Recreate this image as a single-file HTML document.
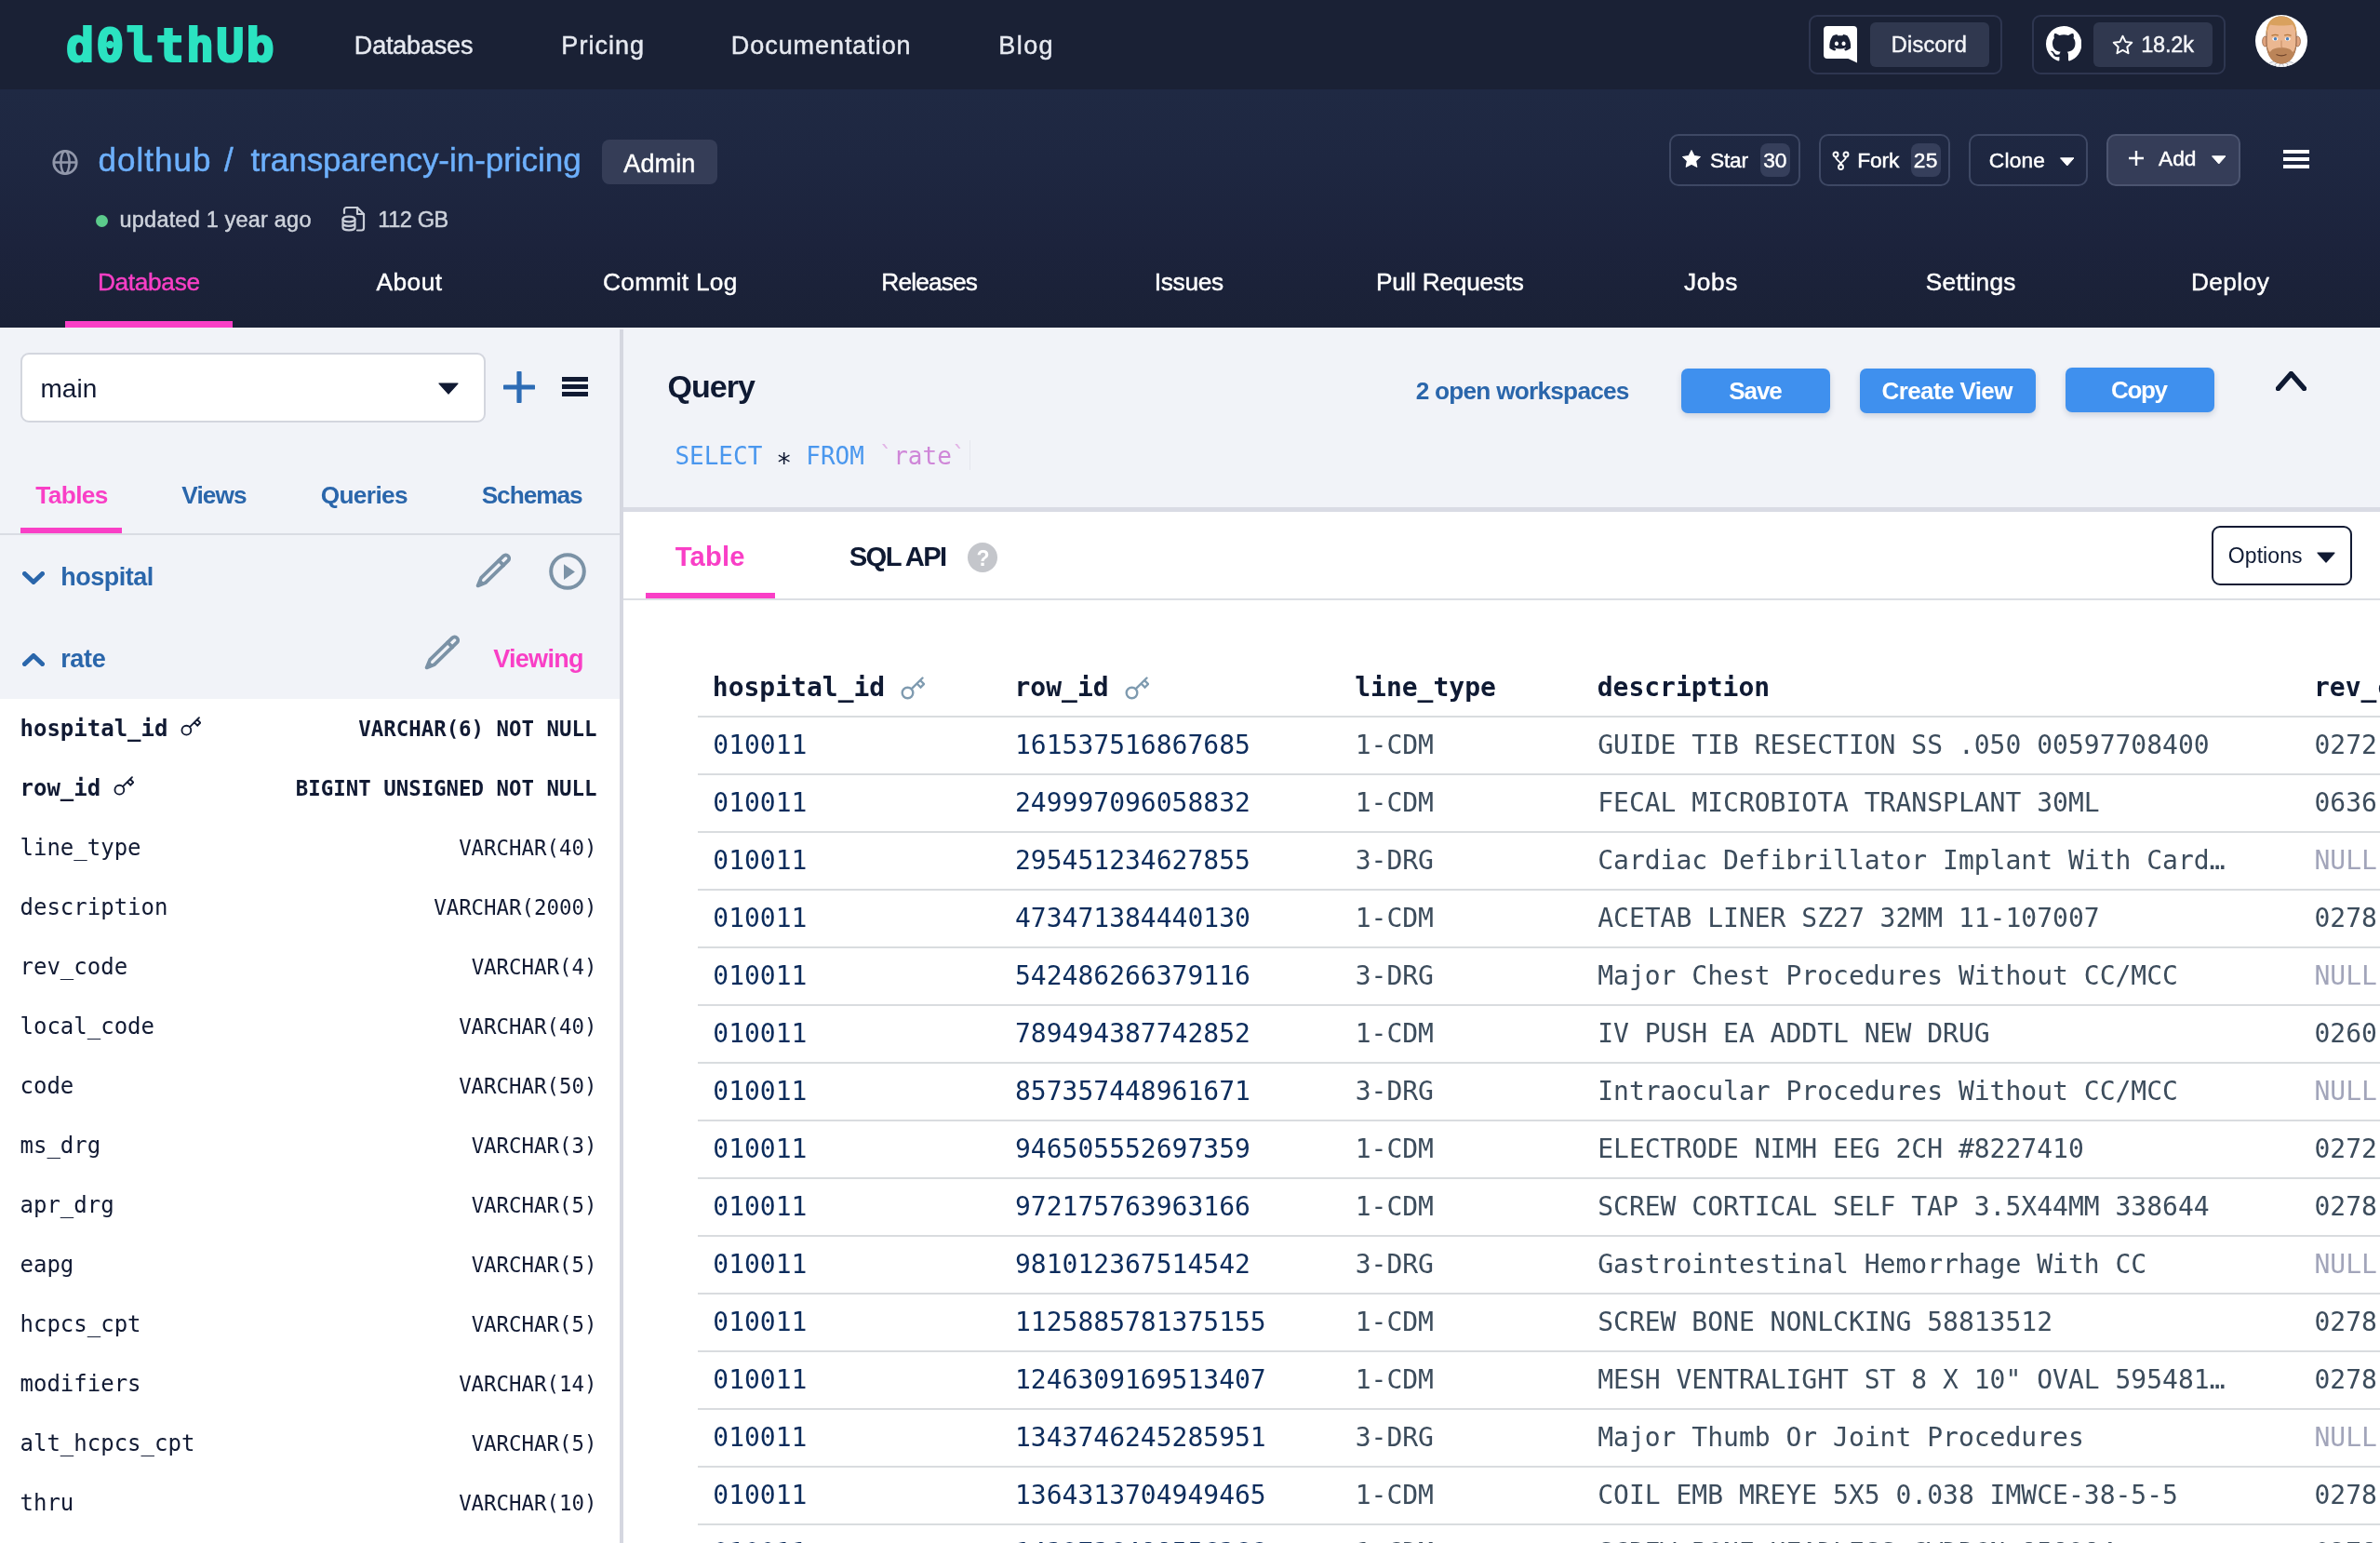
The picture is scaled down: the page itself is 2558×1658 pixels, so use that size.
<!DOCTYPE html>
<html lang="en"><head><meta charset="utf-8"><title>dolthub/transparency-in-pricing</title>
<style>
html,body{margin:0;padding:0}
body{width:2558px;height:1658px;overflow:hidden;position:relative;background:#fff;font-family:"Liberation Sans",sans-serif;transform:translateZ(0)}
.a{position:absolute;display:block}
.t{position:absolute;white-space:pre;line-height:1;display:block;text-decoration:none}
.s{font-family:"Liberation Sans",sans-serif}
.m{font-family:"DejaVu Sans Mono","Liberation Mono",monospace}
</style></head>
<body>
<div aria-hidden="true">
<div class="a" style="left:0px;top:352px;width:2558px;height:1306px;background:#f1f3f8;"></div>
<div class="a" style="left:0px;top:0px;width:2558px;height:96px;background:#1a2135;"></div>
<div class="a" style="left:0px;top:96px;width:2558px;height:256px;background:linear-gradient(180deg,#1f2943 0%,#1e2741 30%,#1c233c 65%,#1a2136 100%);"></div>
<div class="a" style="left:0px;top:751px;width:666px;height:907px;background:#fff;"></div>
<div class="a" style="left:670px;top:550px;width:1888px;height:1108px;background:#fff;"></div>
<div class="a" style="left:666px;top:354px;width:4px;height:1304px;background:#d5d7e0;"></div>
<div class="a" style="left:0px;top:573px;width:666px;height:2px;background:#d9dce3;"></div>
<div class="a" style="left:670px;top:545px;width:1888px;height:5px;background:#d9dbe4;"></div>
<div class="a" style="left:670px;top:643px;width:1888px;height:2px;background:#dcdfe4;"></div>
</div>
<nav aria-label="Site">
<span class="t m" style="left:71px;top:24.2px;font-size:50px;font-weight:700;color:#2be3c1;-webkit-text-stroke:2.2px #2be3c1;letter-spacing:2.15px;paint-order:stroke fill">d0lthUb</span>
<div class="a" style="left:1944px;top:16px;width:208px;height:64px;background:transparent;border-radius:9px;border:2px solid #2e3650;box-sizing:border-box;"></div>
<div class="a" style="left:2010px;top:24px;width:128px;height:48px;background:#30384f;border-radius:6px;"></div>
<svg class="a" style="left:1958px;top:26px;" width="42" height="44" viewBox="0 0 42 44"><path d="M6 2h28a4 4 0 0 1 4 4v35.500l-9.500-4.500H6a4 4 0 0 1-4-4V6a4 4 0 0 1 4-4z" fill="#fff"/><g transform="translate(8.3,8.4) scale(0.954)"><path d="M20.317 4.3698a19.7913 19.7913 0 00-4.8851-1.5152.0741.0741 0 00-.0785.0371c-.211.3753-.4447.8648-.6083 1.2495-1.8447-.2762-3.68-.2762-5.4868 0-.1636-.3933-.4058-.8742-.6177-1.2495a.077.077 0 00-.0785-.037 19.7363 19.7363 0 00-4.8852 1.515.0699.0699 0 00-.0321.0277C.5334 9.0458-.319 13.5799.0992 18.0578a.0824.0824 0 00.0312.0561c2.0528 1.5076 4.0413 2.4228 5.9929 3.0294a.0777.0777 0 00.0842-.0276c.4616-.6304.8731-1.2952 1.226-1.9942a.076.076 0 00-.0416-.1057c-.6528-.2476-1.2743-.5495-1.8722-.8923a.077.077 0 01-.0076-.1277c.1258-.0943.2517-.1923.3718-.2914a.0743.0743 0 01.0776-.0105c3.9278 1.7933 8.18 1.7933 12.0614 0a.0739.0739 0 01.0785.0095c.1202.099.246.1981.3728.2924a.077.077 0 01-.0066.1276 12.2986 12.2986 0 01-1.873.8914.0766.0766 0 00-.0407.1067c.3604.698.7719 1.3628 1.225 1.9932a.076.076 0 00.0842.0286c1.961-.6067 3.9495-1.5219 6.0023-3.0294a.077.077 0 00.0313-.0552c.5004-5.177-.8382-9.6739-3.5485-13.6604a.061.061 0 00-.0312-.0286zM8.02 15.3312c-1.1825 0-2.1569-1.0857-2.1569-2.419 0-1.3332.9555-2.4189 2.157-2.4189 1.2108 0 2.1757 1.0952 2.1568 2.419 0 1.3332-.9555 2.4189-2.1569 2.4189zm7.9748 0c-1.1825 0-2.1569-1.0857-2.1569-2.419 0-1.3332.9554-2.4189 2.1569-2.4189 1.2108 0 2.1757 1.0952 2.1568 2.419 0 1.3332-.946 2.4189-2.1568 2.4189z" fill="#1a2135"/></g></svg>
<div class="a" style="left:2184px;top:16px;width:208px;height:64px;background:transparent;border-radius:9px;border:2px solid #2e3650;box-sizing:border-box;"></div>
<div class="a" style="left:2250px;top:24px;width:128px;height:48px;background:#30384f;border-radius:6px;"></div>
<svg class="a" style="left:2199px;top:28.4px;" width="38.4" height="38.4" viewBox="0 0 16 16"><path d="M8 0C3.58 0 0 3.58 0 8c0 3.54 2.29 6.53 5.47 7.59.4.07.55-.17.55-.38 0-.19-.01-.82-.01-1.49-2.01.37-2.53-.49-2.69-.94-.09-.23-.48-.94-.82-1.13-.28-.15-.68-.52-.01-.53.63-.01 1.08.58 1.23.82.72 1.21 1.87.87 2.33.66.07-.52.28-.87.51-1.07-1.78-.2-3.64-.89-3.64-3.95 0-.87.31-1.59.82-2.15-.08-.2-.36-1.02.08-2.12 0 0 .67-.21 2.2.82.64-.18 1.32-.27 2-.27.68 0 1.36.09 2 .27 1.53-1.04 2.2-.82 2.2-.82.44 1.1.16 1.92.08 2.12.51.56.82 1.27.82 2.15 0 3.07-1.87 3.75-3.65 3.95.29.25.54.73.54 1.48 0 1.07-.01 1.93-.01 2.2 0 .21.15.46.55.38A8.013 8.013 0 0016 8c0-4.42-3.58-8-8-8z" fill="#fff"/></svg>
<svg class="a" style="left:2269.5px;top:36.5px;" width="23" height="23" viewBox="0 0 24 24"><path d="M12 1.8l3.1 6.5 7.1.9-5.2 4.9 1.3 7-6.3-3.4-6.3 3.4 1.3-7-5.2-4.9 7.1-.9z" fill="none" stroke="#fff" stroke-width="2" stroke-linejoin="round"/></svg>
<svg class="a" style="left:2424px;top:15.8px;" width="56" height="56" viewBox="0 0 56 56"><defs><clipPath id="av"><circle cx="28" cy="28" r="28"/></clipPath></defs><circle cx="28" cy="28" r="28" fill="#fff"/><g clip-path="url(#av)"><path d="M9 60c2-8 10-11 19-11s17 3 19 11z" fill="#f1f2f5" stroke="#b4b8c2" stroke-width="1"/><path d="M28 50l-7 3 3 5zM28 50l7 3-3 5z" fill="#fff" stroke="#b4b8c2" stroke-width=".8"/><ellipse cx="10.600" cy="28.500" rx="3" ry="5.500" fill="#e0a47f" stroke="#8a5a3c" stroke-width=".7"/><ellipse cx="45.400" cy="28.500" rx="3" ry="5.500" fill="#e0a47f" stroke="#8a5a3c" stroke-width=".7"/><path d="M12 22C12 8 19 2 28 2s16 6 16 20v8c0 13-7 22-16 22s-16-9-16-22z" fill="#ebb791" stroke="#6e452d" stroke-width=".8"/><path d="M11.800 23C10.500 8.500 18 1.500 28 1.500S45.500 8.500 44.200 22c-1-5-2.200-8.500-4.200-11.500-6.500 1.300-17.500 1.300-24 0-2 3-3.200 6.500-4.200 11.500z" fill="#d9a15e"/><path d="M12.300 31c1 5 2 8 3.500 9 2-3.200 5-4.800 12.200-4.800s10.200 1.600 12.200 4.800c1.500-1 2.500-4 3.500-9 0 14-6.500 21.500-15.700 21.500S12.300 45 12.300 31z" fill="#bb8458"/><path d="M22.500 42.500q5.500 2.600 11 0" stroke="#6e432a" stroke-width="1.200" fill="none"/><path d="M28 27.500v6.500q0 1.500 1.800 1.500" stroke="#c48a63" stroke-width="1" fill="none"/><ellipse cx="21.300" cy="25.800" rx="3" ry="1.900" fill="#fff"/><ellipse cx="34.700" cy="25.800" rx="3" ry="1.900" fill="#fff"/><circle cx="21.500" cy="25.800" r="1.800" fill="#4d7fb8"/><circle cx="34.500" cy="25.800" r="1.800" fill="#4d7fb8"/><path d="M17.500 22.300q3.800-1.800 7.300-.2M31.200 22.100q3.500-1.600 7.300.2" stroke="#b5783c" stroke-width="1.300" fill="none"/></g></svg>
<a class="t s" style="left:380.84px;top:36.00px;font-size:27px;color:#e6e9f0;letter-spacing:-0.184px;-webkit-text-stroke:0.45px #e6e9f0;">Databases</a>
<a class="t s" style="left:603.34px;top:36.00px;font-size:27px;color:#e6e9f0;letter-spacing:1.047px;-webkit-text-stroke:0.45px #e6e9f0;">Pricing</a>
<a class="t s" style="left:785.84px;top:36.00px;font-size:27px;color:#e6e9f0;letter-spacing:0.934px;-webkit-text-stroke:0.45px #e6e9f0;">Documentation</a>
<a class="t s" style="left:1073.34px;top:36.00px;font-size:27px;color:#e6e9f0;letter-spacing:1.424px;-webkit-text-stroke:0.45px #e6e9f0;">Blog</a>
<a class="t s" style="left:2032.82px;top:37.00px;font-size:23.5px;color:#f4f5f8;letter-spacing:0.243px;-webkit-text-stroke:0.45px #f4f5f8;">Discord</a>
<a class="t s" style="left:2301.24px;top:37.00px;font-size:23.5px;color:#f4f5f8;letter-spacing:-0.211px;-webkit-text-stroke:0.45px #f4f5f8;">18.2k</a>
</nav>
<header>
<svg class="a" style="left:55px;top:159.5px;" width="30" height="30" viewBox="0 0 30 30"><g fill="none" stroke="#9197aa" stroke-width="2.8"><circle cx="15" cy="14.500" r="12.200"/><ellipse cx="15" cy="14.500" rx="4.600" ry="12.200" stroke-width="2.500"/><path d="M3 14.500h24" stroke-width="2.500"/></g></svg>
<div class="a" style="left:647px;top:150px;width:124px;height:48px;background:#353d57;border-radius:8px;"></div>
<div class="a" style="left:102.5px;top:230.5px;width:13px;height:13px;border-radius:50%;background:#5ccb8c"></div>
<svg class="a" style="left:366px;top:220px;" width="28" height="30" viewBox="0 0 28 30"><g fill="none" stroke="#c9ced8" stroke-width="2.2" stroke-linejoin="round" stroke-linecap="round"><path d="M4 9V5.500a2.500 2.500 0 0 1 2.500-2.500H18l7 7v15a2.500 2.500 0 0 1-2.500 2.500H18"/><path d="M18 3v7h7"/><ellipse cx="9" cy="15.500" rx="6.500" ry="2.800"/><path d="M2.500 15.500v9c0 1.600 2.900 2.800 6.500 2.800s6.500-1.200 6.500-2.800v-9M2.500 20c0 1.600 2.900 2.800 6.500 2.800s6.500-1.200 6.500-2.800"/></g></svg>
<div class="a" style="left:1794px;top:144px;width:141px;height:56px;background:transparent;border-radius:10px;border:2px solid #3e4864;box-sizing:border-box;"></div>
<svg class="a" style="left:1807px;top:160.3px;" width="22" height="22" viewBox="0 0 24 24"><path d="M12 1.8l3.1 6.5 7.1.9-5.2 4.9 1.3 7-6.3-3.4-6.3 3.4 1.3-7-5.2-4.9 7.1-.9z" fill="#fff" stroke="#fff" stroke-width="1.2" stroke-linejoin="round"/></svg>
<div class="a" style="left:1892px;top:154px;width:32px;height:35.5px;background:#363f5b;border-radius:8px;"></div>
<div class="a" style="left:1955px;top:144px;width:141px;height:56px;background:transparent;border-radius:10px;border:2px solid #3e4864;box-sizing:border-box;"></div>
<svg class="a" style="left:1968.5px;top:162px;" width="19" height="22" viewBox="0 0 19 22"><g fill="none" stroke="#fff" stroke-width="1.9"><circle cx="4" cy="4" r="2.500"/><circle cx="15" cy="4" r="2.500"/><circle cx="9.500" cy="17.500" r="2.500"/><path d="M4 6.500c0 5 5.500 3.500 5.500 8.500M15 6.500c0 5-5.500 3.500-5.500 8.500"/></g></svg>
<div class="a" style="left:2054px;top:154px;width:31.5px;height:35.5px;background:#363f5b;border-radius:8px;"></div>
<div class="a" style="left:2116px;top:144px;width:128px;height:56px;background:transparent;border-radius:10px;border:2px solid #3e4864;box-sizing:border-box;"></div>
<svg class="a" style="left:2213.5px;top:168.5px;" width="15.5" height="9.5" viewBox="0 0 15.5 9.5"><path d="M0.500 0.800h14.500l-7.250 8.200z" fill="#fff" stroke="#fff" stroke-width="1" stroke-linejoin="round"/></svg>
<div class="a" style="left:2264px;top:144px;width:144px;height:56px;background:#353d58;border-radius:10px;border:2px solid #4c5570;box-sizing:border-box;"></div>
<svg class="a" style="left:2287px;top:161px;" width="18" height="18" viewBox="0 0 18 18"><path d="M9 1v16M1 9h16" stroke="#fff" stroke-width="2.400" fill="none"/></svg>
<svg class="a" style="left:2376.5px;top:166.5px;" width="15.5" height="9.5" viewBox="0 0 15.5 9.5"><path d="M0.500 0.800h14.500l-7.250 8.200z" fill="#fff" stroke="#fff" stroke-width="1" stroke-linejoin="round"/></svg>
<div class="a" style="left:2454px;top:161px;width:28px;height:4px;background:#fff;"></div>
<div class="a" style="left:2454px;top:169px;width:28px;height:4px;background:#fff;"></div>
<div class="a" style="left:2454px;top:177px;width:28px;height:4px;background:#fff;"></div>
<a class="t s" style="left:105.60px;top:154.00px;font-size:35px;color:#6db0fc;letter-spacing:1.002px;-webkit-text-stroke:0.45px #6db0fc;">dolthub</a>
<span class="t s" style="left:241.00px;top:154.00px;font-size:35px;color:#6db0fc;-webkit-text-stroke:0.45px #6db0fc;">/</span>
<a class="t s" style="left:269.48px;top:154.00px;font-size:35px;color:#6db0fc;letter-spacing:-0.037px;-webkit-text-stroke:0.45px #6db0fc;">transparency-in-pricing</a>
<span class="t s" style="left:670.30px;top:163.00px;font-size:27px;color:#fff;letter-spacing:0.105px;-webkit-text-stroke:0.45px #fff;">Admin</span>
<span class="t s" style="left:128.59px;top:225.00px;font-size:23.5px;color:#ced3dc;letter-spacing:0.197px;-webkit-text-stroke:0.45px #ced3dc;">updated 1 year ago</span>
<span class="t s" style="left:406.24px;top:225.00px;font-size:23.5px;color:#ced3dc;letter-spacing:-0.393px;-webkit-text-stroke:0.45px #ced3dc;">112 GB</span>
<span class="t s" style="left:1837.98px;top:161.00px;font-size:22.75px;color:#fff;letter-spacing:-0.201px;-webkit-text-stroke:0.45px #fff;">Star</span>
<span class="t s" style="left:1895.20px;top:161.00px;font-size:22.75px;color:#fff;letter-spacing:-0.186px;-webkit-text-stroke:0.45px #fff;">30</span>
<span class="t s" style="left:1996.18px;top:161.00px;font-size:22.75px;color:#fff;letter-spacing:-0.098px;-webkit-text-stroke:0.45px #fff;">Fork</span>
<span class="t s" style="left:2056.86px;top:161.00px;font-size:22.75px;color:#fff;letter-spacing:0.269px;-webkit-text-stroke:0.45px #fff;">25</span>
<span class="t s" style="left:2137.86px;top:161.00px;font-size:22.75px;color:#fff;letter-spacing:0.158px;-webkit-text-stroke:0.45px #fff;">Clone</span>
<span class="t s" style="left:2320.00px;top:159.00px;font-size:22.75px;color:#fff;letter-spacing:-0.044px;-webkit-text-stroke:0.45px #fff;">Add</span>
</header>
<nav aria-label="Database">
<div class="a" style="left:70px;top:345px;width:180px;height:7px;background:#f93fc6;"></div>
<a class="t s" style="left:104.90px;top:290.00px;font-size:26.25px;color:#f93fc6;letter-spacing:-0.313px;-webkit-text-stroke:0.45px #f93fc6;">Database</a>
<a class="t s" style="left:404.50px;top:290.00px;font-size:26.25px;color:#fff;letter-spacing:0.494px;-webkit-text-stroke:0.45px #fff;">About</a>
<a class="t s" style="left:647.99px;top:290.00px;font-size:26.25px;color:#fff;letter-spacing:0.313px;-webkit-text-stroke:0.45px #fff;">Commit Log</a>
<a class="t s" style="left:947.30px;top:290.00px;font-size:26.25px;color:#fff;letter-spacing:-0.831px;-webkit-text-stroke:0.45px #fff;">Releases</a>
<a class="t s" style="left:1240.84px;top:290.00px;font-size:26.25px;color:#fff;letter-spacing:-0.317px;-webkit-text-stroke:0.45px #fff;">Issues</a>
<a class="t s" style="left:1478.90px;top:290.00px;font-size:26.25px;color:#fff;letter-spacing:-0.245px;-webkit-text-stroke:0.45px #fff;">Pull Requests</a>
<a class="t s" style="left:1810.11px;top:290.00px;font-size:26.25px;color:#fff;letter-spacing:0.588px;-webkit-text-stroke:0.45px #fff;">Jobs</a>
<a class="t s" style="left:2069.82px;top:290.00px;font-size:26.25px;color:#fff;letter-spacing:0.250px;-webkit-text-stroke:0.45px #fff;">Settings</a>
<a class="t s" style="left:2354.90px;top:290.00px;font-size:26.25px;color:#fff;letter-spacing:0.438px;-webkit-text-stroke:0.45px #fff;">Deploy</a>
</nav>
<aside>
<div class="a" style="left:22px;top:379px;width:500px;height:75px;background:#fff;border-radius:9px;border:2px solid #d3d6de;box-sizing:border-box;"></div>
<svg class="a" style="left:471px;top:411px;" width="22" height="13" viewBox="0 0 22 13"><path d="M1 1h20l-10 11z" fill="#111a33" stroke="#111a33" stroke-width="1.200" stroke-linejoin="round"/></svg>
<svg class="a" style="left:541px;top:399px;" width="34" height="34" viewBox="0 0 34 34"><path d="M17 1.500v31M1.500 17h31" stroke="#2d6cb5" stroke-width="5.200" stroke-linecap="round" fill="none"/></svg>
<div class="a" style="left:603.5px;top:405px;width:28.5px;height:4.5px;background:#111a33;"></div>
<div class="a" style="left:603.5px;top:413px;width:28.5px;height:4.5px;background:#111a33;"></div>
<div class="a" style="left:603.5px;top:421px;width:28.5px;height:4.5px;background:#111a33;"></div>
<div class="a" style="left:22px;top:567px;width:109px;height:6px;background:#f93fc6;"></div>
<svg class="a" style="left:24px;top:613.5px;" width="24" height="14" viewBox="0 0 24 14"><polyline points="2.500,2.500 12.0,11.5 21.5,2.500" fill="none" stroke="#2a66ab" stroke-width="5" stroke-linecap="round" stroke-linejoin="round"/></svg>
<svg class="a" style="left:511px;top:594.3px;" width="38" height="38" viewBox="0 0 38 38"><g fill="none" stroke="#7b92a6" stroke-width="3.800" stroke-linejoin="round" stroke-linecap="round"><path d="M2.600 35.400L6.100 26.880L30.140 3.440A3.550 3.550 0 0 1 35.160 8.460L11.120 31.900Z"/><path d="M25.190 8.390L30.210 13.410"/></g><path d="M2.600 35.400L5 29.500L8.500 33z" fill="#7b92a6" stroke="#7b92a6" stroke-width="2" stroke-linejoin="round"/></svg>
<svg class="a" style="left:590px;top:593.5px;" width="40" height="40" viewBox="0 0 40 40"><circle cx="20" cy="20" r="17.800" fill="none" stroke="#7b92a6" stroke-width="4"/><path d="M16 12.300l11.900 8.300-11.900 8.300z" fill="#7b92a6"/></svg>
<svg class="a" style="left:24px;top:702px;" width="24" height="14" viewBox="0 0 24 14"><polyline points="2.500,11.5 12.0,2.500 21.5,11.5" fill="none" stroke="#2a66ab" stroke-width="5" stroke-linecap="round" stroke-linejoin="round"/></svg>
<svg class="a" style="left:456px;top:682.4px;" width="38" height="38" viewBox="0 0 38 38"><g fill="none" stroke="#7b92a6" stroke-width="3.800" stroke-linejoin="round" stroke-linecap="round"><path d="M2.600 35.400L6.100 26.880L30.140 3.440A3.550 3.550 0 0 1 35.160 8.460L11.120 31.900Z"/><path d="M25.190 8.390L30.210 13.410"/></g><path d="M2.600 35.400L5 29.500L8.500 33z" fill="#7b92a6" stroke="#7b92a6" stroke-width="2" stroke-linejoin="round"/></svg>
<svg class="a" style="left:193.6px;top:769.4px;" width="22.099999999999998" height="22.099999999999998" viewBox="0 0 26 26"><g fill="none" stroke="#111a33" stroke-width="2.2" stroke-linecap="round"><circle cx="7.500" cy="18.500" r="5.800"/><path d="M11.800 14.200L23.500 2.500M17.500 8.500l4 4 3.500-3.500-4-4"/></g></svg>
<svg class="a" style="left:121.8px;top:833.4px;" width="22.099999999999998" height="22.099999999999998" viewBox="0 0 26 26"><g fill="none" stroke="#111a33" stroke-width="2.2" stroke-linecap="round"><circle cx="7.500" cy="18.500" r="5.800"/><path d="M11.800 14.200L23.500 2.500M17.500 8.500l4 4 3.500-3.500-4-4"/></g></svg>
<span class="t s" style="left:43.38px;top:404.00px;font-size:28px;color:#111a33;letter-spacing:0.081px;">main</span>
<span class="t s" style="left:38.34px;top:519.00px;font-size:26.25px;color:#f93fc6;letter-spacing:-0.640px;font-weight:700;">Tables</span>
<span class="t s" style="left:195.27px;top:519.00px;font-size:26.25px;color:#2a66ab;letter-spacing:-0.916px;font-weight:700;">Views</span>
<span class="t s" style="left:344.65px;top:519.00px;font-size:26.25px;color:#2a66ab;letter-spacing:-0.627px;font-weight:700;">Queries</span>
<span class="t s" style="left:517.64px;top:519.00px;font-size:26.25px;color:#2a66ab;letter-spacing:-1.046px;font-weight:700;">Schemas</span>
<span class="t s" style="left:65.15px;top:607.00px;font-size:27px;color:#2a66ab;letter-spacing:-0.488px;font-weight:700;">hospital</span>
<span class="t s" style="left:65.15px;top:695.00px;font-size:27px;color:#2a66ab;letter-spacing:-0.278px;font-weight:700;">rate</span>
<span class="t s" style="left:530.16px;top:695.00px;font-size:27px;color:#f93fc6;letter-spacing:-0.702px;font-weight:700;">Viewing</span>
<div>
<span class="t m" style="left:21.50px;top:771.00px;font-size:24px;color:#111a33;font-weight:700;">hospital_id</span>
<span class="t m" style="left:385.27px;top:772.00px;font-size:22.4px;color:#111a33;font-weight:700;">VARCHAR(6) NOT NULL</span>
</div>
<div>
<span class="t m" style="left:21.50px;top:835.00px;font-size:24px;color:#111a33;font-weight:700;">row_id</span>
<span class="t m" style="left:317.84px;top:836.00px;font-size:22.4px;color:#111a33;font-weight:700;">BIGINT UNSIGNED NOT NULL</span>
</div>
<div>
<span class="t m" style="left:21.50px;top:899.00px;font-size:24px;color:#111a33;">line_type</span>
<span class="t m" style="left:493.15px;top:900.00px;font-size:22.4px;color:#111a33;">VARCHAR(40)</span>
</div>
<div>
<span class="t m" style="left:21.50px;top:963.00px;font-size:24px;color:#111a33;">description</span>
<span class="t m" style="left:466.18px;top:964.00px;font-size:22.4px;color:#111a33;">VARCHAR(2000)</span>
</div>
<div>
<span class="t m" style="left:21.50px;top:1027.00px;font-size:24px;color:#111a33;">rev_code</span>
<span class="t m" style="left:506.64px;top:1028.00px;font-size:22.4px;color:#111a33;">VARCHAR(4)</span>
</div>
<div>
<span class="t m" style="left:21.50px;top:1091.00px;font-size:24px;color:#111a33;">local_code</span>
<span class="t m" style="left:493.15px;top:1092.00px;font-size:22.4px;color:#111a33;">VARCHAR(40)</span>
</div>
<div>
<span class="t m" style="left:21.50px;top:1155.00px;font-size:24px;color:#111a33;">code</span>
<span class="t m" style="left:493.15px;top:1156.00px;font-size:22.4px;color:#111a33;">VARCHAR(50)</span>
</div>
<div>
<span class="t m" style="left:21.50px;top:1219.00px;font-size:24px;color:#111a33;">ms_drg</span>
<span class="t m" style="left:506.64px;top:1220.00px;font-size:22.4px;color:#111a33;">VARCHAR(3)</span>
</div>
<div>
<span class="t m" style="left:21.50px;top:1283.00px;font-size:24px;color:#111a33;">apr_drg</span>
<span class="t m" style="left:506.64px;top:1284.00px;font-size:22.4px;color:#111a33;">VARCHAR(5)</span>
</div>
<div>
<span class="t m" style="left:21.50px;top:1347.00px;font-size:24px;color:#111a33;">eapg</span>
<span class="t m" style="left:506.64px;top:1348.00px;font-size:22.4px;color:#111a33;">VARCHAR(5)</span>
</div>
<div>
<span class="t m" style="left:21.50px;top:1411.00px;font-size:24px;color:#111a33;">hcpcs_cpt</span>
<span class="t m" style="left:506.64px;top:1412.00px;font-size:22.4px;color:#111a33;">VARCHAR(5)</span>
</div>
<div>
<span class="t m" style="left:21.50px;top:1475.00px;font-size:24px;color:#111a33;">modifiers</span>
<span class="t m" style="left:493.15px;top:1476.00px;font-size:22.4px;color:#111a33;">VARCHAR(14)</span>
</div>
<div>
<span class="t m" style="left:21.50px;top:1539.00px;font-size:24px;color:#111a33;">alt_hcpcs_cpt</span>
<span class="t m" style="left:506.64px;top:1540.00px;font-size:22.4px;color:#111a33;">VARCHAR(5)</span>
</div>
<div>
<span class="t m" style="left:21.50px;top:1603.00px;font-size:24px;color:#111a33;">thru</span>
<span class="t m" style="left:493.15px;top:1604.00px;font-size:22.4px;color:#111a33;">VARCHAR(10)</span>
</div>
</aside>
<section aria-label="Query">
<div class="a" style="left:1041.5px;top:473px;width:1.5px;height:32px;background:#e5e7ed;"></div>
<div class="a" style="left:1807px;top:396px;width:160px;height:48px;background:#3f90ee;border-radius:7px;box-shadow:0 3px 6px rgba(40,60,100,.18);"></div>
<div class="a" style="left:1999px;top:396px;width:189px;height:48px;background:#3f90ee;border-radius:7px;box-shadow:0 3px 6px rgba(40,60,100,.18);"></div>
<div class="a" style="left:2220px;top:395px;width:160px;height:48px;background:#3f90ee;border-radius:7px;box-shadow:0 3px 6px rgba(40,60,100,.18);"></div>
<svg class="a" style="left:2445.5px;top:398.5px;" width="33" height="21" viewBox="0 0 33 21"><polyline points="2.500,18.5 16.5,2.500 30.5,18.5" fill="none" stroke="#0f1a33" stroke-width="5.5" stroke-linecap="round" stroke-linejoin="round"/></svg>
<span class="t s" style="left:717.54px;top:398.00px;font-size:34px;color:#0f1a33;letter-spacing:-0.941px;font-weight:700;">Query</span>
<span class="t m" style="left:725.40px;top:477.00px;font-size:26px;color:#4a97ee;">SELECT</span>
<span class="t m" style="left:834.37px;top:483.50px;font-size:28px;color:#111a33;">*</span>
<span class="t m" style="left:866.28px;top:477.00px;font-size:26px;color:#4a97ee;">FROM</span>
<span class="t m" style="left:944.55px;top:477.00px;font-size:26px;color:#e2b4e6;">`</span>
<span class="t m" style="left:960.20px;top:477.00px;font-size:26px;color:#cf86d8;">rate</span>
<span class="t m" style="left:1022.81px;top:477.00px;font-size:26px;color:#e2b4e6;">`</span>
<span class="t s" style="left:1521.71px;top:407.00px;font-size:26.25px;color:#2a66ab;letter-spacing:-0.778px;font-weight:700;">2 open workspaces</span>
<span class="t s" style="left:1858.35px;top:407.00px;font-size:26px;color:#fff;letter-spacing:-1.087px;font-weight:700;">Save</span>
<span class="t s" style="left:2022.46px;top:407.00px;font-size:26px;color:#fff;letter-spacing:-0.595px;font-weight:700;">Create View</span>
<span class="t s" style="left:2268.96px;top:406.00px;font-size:26px;color:#fff;letter-spacing:-1.310px;font-weight:700;">Copy</span>
</section>
<section aria-label="Result tabs">
<div class="a" style="left:1040px;top:583px;width:32px;height:32px;border-radius:50%;background:#c4c6cb"></div>
<div class="a" style="left:694px;top:637px;width:139px;height:6px;background:#f93fc6;"></div>
<div class="a" style="left:2377px;top:565px;width:151px;height:63.5px;background:#fff;border-radius:9px;border:2px solid #111a33;box-sizing:border-box;"></div>
<svg class="a" style="left:2490px;top:592.5px;" width="20" height="12" viewBox="0 0 20 12"><path d="M1 1h18l-9 10z" fill="#111a33" stroke="#111a33" stroke-width="1.200" stroke-linejoin="round"/></svg>
<span class="t s" style="left:725.71px;top:583.50px;font-size:29.25px;color:#f93fc6;letter-spacing:0.120px;font-weight:700;">Table</span>
<span class="t s" style="left:912.77px;top:583.50px;font-size:29.25px;color:#0f1a33;letter-spacing:-1.658px;font-weight:700;">SQL API</span>
<span class="t s" style="left:1049.46px;top:588.50px;font-size:23px;color:#fff;font-weight:700;">?</span>
<span class="t s" style="left:2394.87px;top:586.00px;font-size:23px;color:#0f1a33;letter-spacing:0.063px;">Options</span>
</section>
<main role="table" aria-label="rate">
<svg class="a" style="left:968px;top:726px;" width="26.0" height="26.0" viewBox="0 0 26 26"><g fill="none" stroke="#7f9bb0" stroke-width="2.4" stroke-linecap="round"><circle cx="7.500" cy="18.500" r="5.800"/><path d="M11.800 14.200L23.500 2.500M17.500 8.500l4 4 3.500-3.500-4-4"/></g></svg>
<svg class="a" style="left:1209px;top:726px;" width="26.0" height="26.0" viewBox="0 0 26 26"><g fill="none" stroke="#7f9bb0" stroke-width="2.4" stroke-linecap="round"><circle cx="7.500" cy="18.500" r="5.800"/><path d="M11.800 14.200L23.500 2.500M17.500 8.500l4 4 3.500-3.500-4-4"/></g></svg>
<div class="a" style="left:750px;top:769px;width:1808px;height:2px;background:#d9dcdf;"></div>
<div class="a" style="left:750px;top:831px;width:1808px;height:2px;background:#d9dcdf;"></div>
<div class="a" style="left:750px;top:893px;width:1808px;height:2px;background:#d9dcdf;"></div>
<div class="a" style="left:750px;top:955px;width:1808px;height:2px;background:#d9dcdf;"></div>
<div class="a" style="left:750px;top:1017px;width:1808px;height:2px;background:#d9dcdf;"></div>
<div class="a" style="left:750px;top:1079px;width:1808px;height:2px;background:#d9dcdf;"></div>
<div class="a" style="left:750px;top:1141px;width:1808px;height:2px;background:#d9dcdf;"></div>
<div class="a" style="left:750px;top:1203px;width:1808px;height:2px;background:#d9dcdf;"></div>
<div class="a" style="left:750px;top:1265px;width:1808px;height:2px;background:#d9dcdf;"></div>
<div class="a" style="left:750px;top:1327px;width:1808px;height:2px;background:#d9dcdf;"></div>
<div class="a" style="left:750px;top:1389px;width:1808px;height:2px;background:#d9dcdf;"></div>
<div class="a" style="left:750px;top:1451px;width:1808px;height:2px;background:#d9dcdf;"></div>
<div class="a" style="left:750px;top:1513px;width:1808px;height:2px;background:#d9dcdf;"></div>
<div class="a" style="left:750px;top:1575px;width:1808px;height:2px;background:#d9dcdf;"></div>
<div class="a" style="left:750px;top:1637px;width:1808px;height:2px;background:#d9dcdf;"></div>
<div role="row">
<span class="t m" role="columnheader" style="left:765.80px;top:725.00px;font-size:28px;color:#0f1a33;font-weight:700;">hospital_id</span>
<span class="t m" role="columnheader" style="left:1090.50px;top:725.00px;font-size:28px;color:#0f1a33;font-weight:700;">row_id</span>
<span class="t m" role="columnheader" style="left:1456.20px;top:725.00px;font-size:28px;color:#0f1a33;font-weight:700;">line_type</span>
<span class="t m" role="columnheader" style="left:1716.70px;top:725.00px;font-size:28px;color:#0f1a33;font-weight:700;">description</span>
<span class="t m" role="columnheader" style="left:2487.00px;top:725.00px;font-size:28px;color:#0f1a33;font-weight:700;">rev_code</span>
</div>
<div role="row">
<span class="t m" role="cell" style="left:766.30px;top:787.00px;font-size:28px;color:#0c2c5c;">010011</span>
<span class="t m" role="cell" style="left:1091.00px;top:787.00px;font-size:28px;color:#0c2c5c;">161537516867685</span>
<span class="t m" role="cell" style="left:1456.70px;top:787.00px;font-size:28px;color:#3c4c5c;">1-CDM</span>
<span class="t m" role="cell" style="left:1717.20px;top:787.00px;font-size:28px;color:#3c4c5c;">GUIDE TIB RESECTION SS .050 00597708400</span>
<span class="t m" role="cell" style="left:2487.50px;top:787.00px;font-size:28px;color:#3c4c5c;">0272</span>
</div>
<div role="row">
<span class="t m" role="cell" style="left:766.30px;top:849.00px;font-size:28px;color:#0c2c5c;">010011</span>
<span class="t m" role="cell" style="left:1091.00px;top:849.00px;font-size:28px;color:#0c2c5c;">249997096058832</span>
<span class="t m" role="cell" style="left:1456.70px;top:849.00px;font-size:28px;color:#3c4c5c;">1-CDM</span>
<span class="t m" role="cell" style="left:1717.20px;top:849.00px;font-size:28px;color:#3c4c5c;">FECAL MICROBIOTA TRANSPLANT 30ML</span>
<span class="t m" role="cell" style="left:2487.50px;top:849.00px;font-size:28px;color:#3c4c5c;">0636</span>
</div>
<div role="row">
<span class="t m" role="cell" style="left:766.30px;top:911.00px;font-size:28px;color:#0c2c5c;">010011</span>
<span class="t m" role="cell" style="left:1091.00px;top:911.00px;font-size:28px;color:#0c2c5c;">295451234627855</span>
<span class="t m" role="cell" style="left:1456.70px;top:911.00px;font-size:28px;color:#3c4c5c;">3-DRG</span>
<span class="t m" role="cell" style="left:1717.20px;top:911.00px;font-size:28px;color:#3c4c5c;">Cardiac Defibrillator Implant With Card…</span>
<span class="t m" role="cell" style="left:2487.50px;top:911.00px;font-size:28px;color:#a2a5ba;">NULL</span>
</div>
<div role="row">
<span class="t m" role="cell" style="left:766.30px;top:973.00px;font-size:28px;color:#0c2c5c;">010011</span>
<span class="t m" role="cell" style="left:1091.00px;top:973.00px;font-size:28px;color:#0c2c5c;">473471384440130</span>
<span class="t m" role="cell" style="left:1456.70px;top:973.00px;font-size:28px;color:#3c4c5c;">1-CDM</span>
<span class="t m" role="cell" style="left:1717.20px;top:973.00px;font-size:28px;color:#3c4c5c;">ACETAB LINER SZ27 32MM 11-107007</span>
<span class="t m" role="cell" style="left:2487.50px;top:973.00px;font-size:28px;color:#3c4c5c;">0278</span>
</div>
<div role="row">
<span class="t m" role="cell" style="left:766.30px;top:1035.00px;font-size:28px;color:#0c2c5c;">010011</span>
<span class="t m" role="cell" style="left:1091.00px;top:1035.00px;font-size:28px;color:#0c2c5c;">542486266379116</span>
<span class="t m" role="cell" style="left:1456.70px;top:1035.00px;font-size:28px;color:#3c4c5c;">3-DRG</span>
<span class="t m" role="cell" style="left:1717.20px;top:1035.00px;font-size:28px;color:#3c4c5c;">Major Chest Procedures Without CC/MCC</span>
<span class="t m" role="cell" style="left:2487.50px;top:1035.00px;font-size:28px;color:#a2a5ba;">NULL</span>
</div>
<div role="row">
<span class="t m" role="cell" style="left:766.30px;top:1097.00px;font-size:28px;color:#0c2c5c;">010011</span>
<span class="t m" role="cell" style="left:1091.00px;top:1097.00px;font-size:28px;color:#0c2c5c;">789494387742852</span>
<span class="t m" role="cell" style="left:1456.70px;top:1097.00px;font-size:28px;color:#3c4c5c;">1-CDM</span>
<span class="t m" role="cell" style="left:1717.20px;top:1097.00px;font-size:28px;color:#3c4c5c;">IV PUSH EA ADDTL NEW DRUG</span>
<span class="t m" role="cell" style="left:2487.50px;top:1097.00px;font-size:28px;color:#3c4c5c;">0260</span>
</div>
<div role="row">
<span class="t m" role="cell" style="left:766.30px;top:1159.00px;font-size:28px;color:#0c2c5c;">010011</span>
<span class="t m" role="cell" style="left:1091.00px;top:1159.00px;font-size:28px;color:#0c2c5c;">857357448961671</span>
<span class="t m" role="cell" style="left:1456.70px;top:1159.00px;font-size:28px;color:#3c4c5c;">3-DRG</span>
<span class="t m" role="cell" style="left:1717.20px;top:1159.00px;font-size:28px;color:#3c4c5c;">Intraocular Procedures Without CC/MCC</span>
<span class="t m" role="cell" style="left:2487.50px;top:1159.00px;font-size:28px;color:#a2a5ba;">NULL</span>
</div>
<div role="row">
<span class="t m" role="cell" style="left:766.30px;top:1221.00px;font-size:28px;color:#0c2c5c;">010011</span>
<span class="t m" role="cell" style="left:1091.00px;top:1221.00px;font-size:28px;color:#0c2c5c;">946505552697359</span>
<span class="t m" role="cell" style="left:1456.70px;top:1221.00px;font-size:28px;color:#3c4c5c;">1-CDM</span>
<span class="t m" role="cell" style="left:1717.20px;top:1221.00px;font-size:28px;color:#3c4c5c;">ELECTRODE NIMH EEG 2CH #8227410</span>
<span class="t m" role="cell" style="left:2487.50px;top:1221.00px;font-size:28px;color:#3c4c5c;">0272</span>
</div>
<div role="row">
<span class="t m" role="cell" style="left:766.30px;top:1283.00px;font-size:28px;color:#0c2c5c;">010011</span>
<span class="t m" role="cell" style="left:1091.00px;top:1283.00px;font-size:28px;color:#0c2c5c;">972175763963166</span>
<span class="t m" role="cell" style="left:1456.70px;top:1283.00px;font-size:28px;color:#3c4c5c;">1-CDM</span>
<span class="t m" role="cell" style="left:1717.20px;top:1283.00px;font-size:28px;color:#3c4c5c;">SCREW CORTICAL SELF TAP 3.5X44MM 338644</span>
<span class="t m" role="cell" style="left:2487.50px;top:1283.00px;font-size:28px;color:#3c4c5c;">0278</span>
</div>
<div role="row">
<span class="t m" role="cell" style="left:766.30px;top:1345.00px;font-size:28px;color:#0c2c5c;">010011</span>
<span class="t m" role="cell" style="left:1091.00px;top:1345.00px;font-size:28px;color:#0c2c5c;">981012367514542</span>
<span class="t m" role="cell" style="left:1456.70px;top:1345.00px;font-size:28px;color:#3c4c5c;">3-DRG</span>
<span class="t m" role="cell" style="left:1717.20px;top:1345.00px;font-size:28px;color:#3c4c5c;">Gastrointestinal Hemorrhage With CC</span>
<span class="t m" role="cell" style="left:2487.50px;top:1345.00px;font-size:28px;color:#a2a5ba;">NULL</span>
</div>
<div role="row">
<span class="t m" role="cell" style="left:766.30px;top:1407.00px;font-size:28px;color:#0c2c5c;">010011</span>
<span class="t m" role="cell" style="left:1091.00px;top:1407.00px;font-size:28px;color:#0c2c5c;">1125885781375155</span>
<span class="t m" role="cell" style="left:1456.70px;top:1407.00px;font-size:28px;color:#3c4c5c;">1-CDM</span>
<span class="t m" role="cell" style="left:1717.20px;top:1407.00px;font-size:28px;color:#3c4c5c;">SCREW BONE NONLCKING 58813512</span>
<span class="t m" role="cell" style="left:2487.50px;top:1407.00px;font-size:28px;color:#3c4c5c;">0278</span>
</div>
<div role="row">
<span class="t m" role="cell" style="left:766.30px;top:1469.00px;font-size:28px;color:#0c2c5c;">010011</span>
<span class="t m" role="cell" style="left:1091.00px;top:1469.00px;font-size:28px;color:#0c2c5c;">1246309169513407</span>
<span class="t m" role="cell" style="left:1456.70px;top:1469.00px;font-size:28px;color:#3c4c5c;">1-CDM</span>
<span class="t m" role="cell" style="left:1717.20px;top:1469.00px;font-size:28px;color:#3c4c5c;">MESH VENTRALIGHT ST 8 X 10&quot; OVAL 595481…</span>
<span class="t m" role="cell" style="left:2487.50px;top:1469.00px;font-size:28px;color:#3c4c5c;">0278</span>
</div>
<div role="row">
<span class="t m" role="cell" style="left:766.30px;top:1531.00px;font-size:28px;color:#0c2c5c;">010011</span>
<span class="t m" role="cell" style="left:1091.00px;top:1531.00px;font-size:28px;color:#0c2c5c;">1343746245285951</span>
<span class="t m" role="cell" style="left:1456.70px;top:1531.00px;font-size:28px;color:#3c4c5c;">3-DRG</span>
<span class="t m" role="cell" style="left:1717.20px;top:1531.00px;font-size:28px;color:#3c4c5c;">Major Thumb Or Joint Procedures</span>
<span class="t m" role="cell" style="left:2487.50px;top:1531.00px;font-size:28px;color:#a2a5ba;">NULL</span>
</div>
<div role="row">
<span class="t m" role="cell" style="left:766.30px;top:1593.00px;font-size:28px;color:#0c2c5c;">010011</span>
<span class="t m" role="cell" style="left:1091.00px;top:1593.00px;font-size:28px;color:#0c2c5c;">1364313704949465</span>
<span class="t m" role="cell" style="left:1456.70px;top:1593.00px;font-size:28px;color:#3c4c5c;">1-CDM</span>
<span class="t m" role="cell" style="left:1717.20px;top:1593.00px;font-size:28px;color:#3c4c5c;">COIL EMB MREYE 5X5 0.038 IMWCE-38-5-5</span>
<span class="t m" role="cell" style="left:2487.50px;top:1593.00px;font-size:28px;color:#3c4c5c;">0278</span>
</div>
<div role="row">
<span class="t m" role="cell" style="left:766.30px;top:1655.00px;font-size:28px;color:#0c2c5c;">010011</span>
<span class="t m" role="cell" style="left:1091.00px;top:1655.00px;font-size:28px;color:#0c2c5c;">1439736488556366</span>
<span class="t m" role="cell" style="left:1456.70px;top:1655.00px;font-size:28px;color:#3c4c5c;">1-CDM</span>
<span class="t m" role="cell" style="left:1717.20px;top:1655.00px;font-size:28px;color:#3c4c5c;">SCREW BONE HEADLESS CWDRGN 858984</span>
<span class="t m" role="cell" style="left:2487.50px;top:1655.00px;font-size:28px;color:#3c4c5c;">0278</span>
</div>
</main>
</body></html>
